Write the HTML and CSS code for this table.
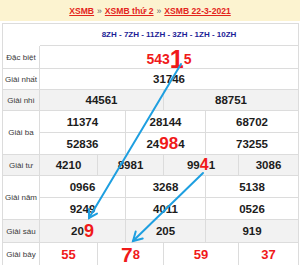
FILE: index.html
```html
<!DOCTYPE html>
<html lang="vi">
<head>
<meta charset="utf-8">
<title>XSMB 22-3-2021</title>
<link rel="stylesheet" href="styles.css">
</head>
<body>
<div class="page">
  <div class="crumbs"><a href="#">XSMB</a><span class="sep">»</span><a href="#">XSMB thứ 2</a><span class="sep">»</span><a href="#">XSMB 22-3-2021</a></div>
  <div class="board">
    <div class="grid">
      <div class="cell codes all">8ZH - 7ZH - 11ZH - 3ZH - 1ZH - 10ZH</div>

      <div class="cell label">Đặc biệt</div>
      <div class="cell num red all db">543<span class="big b1">1</span>5</div>

      <div class="cell label">Giải nhất</div>
      <div class="cell num all">31746</div>

      <div class="cell label grey">Giải nhì</div>
      <div class="cell num grey h1">44561</div>
      <div class="cell num grey h2">88751</div>

      <div class="cell label two">Giải ba</div>
      <div class="cell num t1">11374</div>
      <div class="cell num t2">28144</div>
      <div class="cell num t3">68702</div>
      <div class="cell num t1">52836</div>
      <div class="cell num t2">24<span class="big b98">98</span>4</div>
      <div class="cell num t3">73255</div>

      <div class="cell label grey">Giải tư</div>
      <div class="cell num grey q1">4210</div>
      <div class="cell num grey q2">8981</div>
      <div class="cell num grey q3">99<span class="big b4">4</span>1</div>
      <div class="cell num grey q4">3086</div>

      <div class="cell label two">Giải năm</div>
      <div class="cell num t1">0966</div>
      <div class="cell num t2">3268</div>
      <div class="cell num t3">5138</div>
      <div class="cell num t1">9249</div>
      <div class="cell num t2">4011</div>
      <div class="cell num t3">0526</div>

      <div class="cell label grey">Giải sáu</div>
      <div class="cell num grey t1">20<span class="big b9">9</span></div>
      <div class="cell num grey t2">205</div>
      <div class="cell num grey t3">919</div>

      <div class="cell label">Giải bảy</div>
      <div class="cell num red seven q1">55</div>
      <div class="cell num red seven q2"><span class="big b7">7</span>8</div>
      <div class="cell num red seven q3">59</div>
      <div class="cell num red seven q4">37</div>
    </div>
    <svg class="arrows" width="300" height="265" viewBox="0 0 300 265">
      <g fill="none" stroke="#1e9fe0" stroke-width="2" stroke-linecap="round">
        <line x1="181" y1="64" x2="89" y2="218"/>
        <polyline points="89,209 89,218 97,213.6"/>
        <line x1="203" y1="173" x2="133" y2="241"/>
        <polyline points="135.7,231.4 133,241 142.7,238.5"/>
      </g>
    </svg>
  </div>
</div>
</body>
</html>
```
FILE: styles.css
```css
html, body {
  margin: 0;
  padding: 0;
  background: #ffffff;
}

body {
  width: 300px;
  height: 265px;
  overflow: hidden;
  font-family: "Liberation Sans", Arial, sans-serif;
}

.page {
  display: flex;
  flex-direction: column;
}

.crumbs {
  height: 21px;
  background: #fcf3d0;
  display: flex;
  align-items: center;
  justify-content: center;
  gap: 3px;
  font-size: 8.6px;
  font-weight: bold;
  margin-bottom: 2px;
}

.crumbs a {
  color: #e3241c;
  text-decoration: underline;
}

.crumbs .sep {
  color: #666;
  font-weight: normal;
}

.board {
  position: relative;
  padding: 0 2px;
}

.grid {
  display: grid;
  grid-template-columns: 37px 58px 28px 38px 42px 33px 60px;
  grid-template-rows: 22px 23px 21px 21px 22px 22px 21px 22px 22px 23px 24px;
  border-top: 1px solid #dcdcdc;
  border-left: 1px solid #dcdcdc;
  width: 296px;
}

.cell {
  box-sizing: border-box;
  border-right: 1px solid #dcdcdc;
  border-bottom: 1px solid #dcdcdc;
  display: flex;
  align-items: center;
  justify-content: center;
  white-space: nowrap;
}

.grey {
  background: #f2f2f2;
}

.codes {
  color: #1d1d96;
  font-size: 8px;
  font-weight: bold;
}

.label {
  grid-column: 1 / 2;
  font-size: 8px;
  color: #3a3a3a;
}

.label.two {
  grid-row: span 2;
}

.num {
  font-size: 11.5px;
  font-weight: bold;
  color: #1c1c1c;
  line-height: 14px;
}

.red {
  color: #f01a1a;
}

.db {
  font-size: 14px;
  padding-top: 3px;
}

.seven {
  font-size: 13px;
}

.big {
  color: #f01a1a;
  line-height: 0;
}

.b1 { font-size: 25px; }
.b98 { font-size: 17px; }
.b4 { font-size: 16px; }
.b9 { font-size: 18px; }
.b7 { font-size: 21px; }

.all { grid-column: 2 / 8; }
.h1 { grid-column: 2 / 5; }
.h2 { grid-column: 5 / 8; }
.t1 { grid-column: 2 / 4; }
.t2 { grid-column: 4 / 6; }
.t3 { grid-column: 6 / 8; }
.q1 { grid-column: 2 / 3; }
.q2 { grid-column: 3 / 5; }
.q3 { grid-column: 5 / 7; }
.q4 { grid-column: 7 / 8; }

.arrows {
  position: absolute;
  top: -23px;
  left: 0;
  pointer-events: none;
}
```
